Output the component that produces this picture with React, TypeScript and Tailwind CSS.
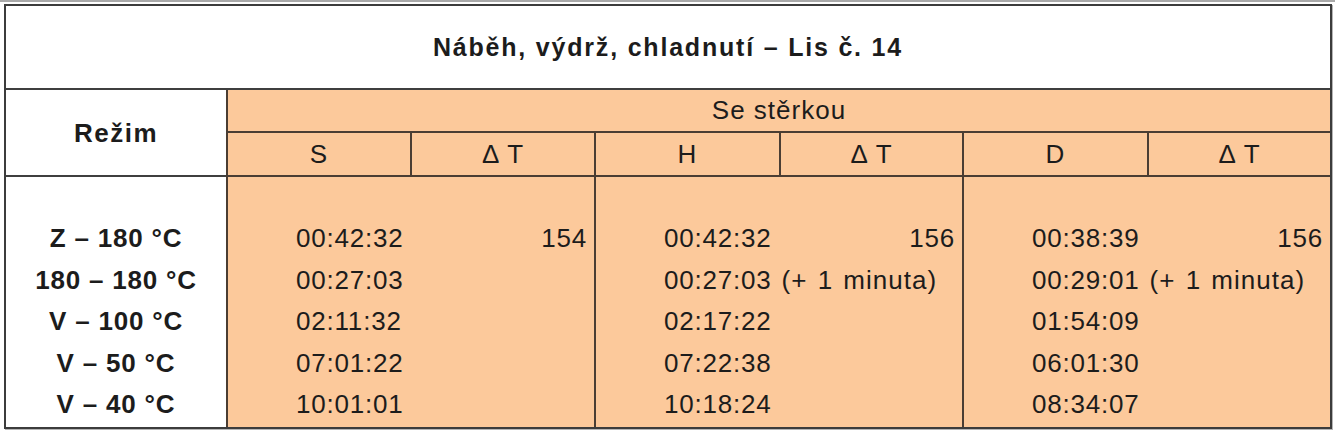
import React from "react";

const labels = ["Z – 180 °C", "180 – 180 °C", "V – 100 °C", "V – 50 °C", "V – 40 °C"];

type Group = { rows: { t: string; note?: string; dt?: string }[] };

const groups: Group[] = [
  {
    rows: [
      { t: "00:42:32", dt: "154" },
      { t: "00:27:03" },
      { t: "02:11:32" },
      { t: "07:01:22" },
      { t: "10:01:01" },
    ],
  },
  {
    rows: [
      { t: "00:42:32", dt: "156" },
      { t: "00:27:03", note: "(+ 1 minuta)" },
      { t: "02:17:22" },
      { t: "07:22:38" },
      { t: "10:18:24" },
    ],
  },
  {
    rows: [
      { t: "00:38:39", dt: "156" },
      { t: "00:29:01", note: "(+ 1 minuta)" },
      { t: "01:54:09" },
      { t: "06:01:30" },
      { t: "08:34:07" },
    ],
  },
];

const subHeads = ["S", "Δ T", "H", "Δ T", "D", "Δ T"];

export default function App() {
  return (
    <div className="w-[1335px] h-[432px] bg-white border-t-2 border-[#a9a9a9] pt-[2px] pl-[4px] font-['Liberation_Sans',Arial,sans-serif] text-[#1c1c1c]">
      <div className="w-[1328px] border-2 border-[#3c3c3c] shadow-[1px_1px_0_#b5b5b5] grid grid-cols-[220px_184px_184px_185px_183px_185px_183px]">
        <div className="col-span-7 h-[84px] border-b-2 border-[#3f3f3f] flex items-center justify-center pt-[2px] text-[25px] font-bold tracking-[1.8px]">
          Náběh, výdrž, chladnutí – Lis č. 14
        </div>

        <div className="row-span-2 border-b-2 border-[#3f3f3f] flex items-center justify-center text-[26px] font-bold tracking-[1.5px] pt-[2px]">
          Režim
        </div>
        <div className="col-span-6 h-[43px] bg-[#fcc99b] border-l-2 border-b-2 border-[#4a3d33] flex items-center justify-center text-[26px] tracking-[1px]">
          Se stěrkou
        </div>
        {subHeads.map((h, i) => (
          <div
            key={i}
            className="h-[44px] bg-[#fcc99b] border-l-2 border-b-2 border-[#4a3d33] flex items-center justify-center text-[26px] tracking-[1px]"
          >
            {h}
          </div>
        ))}

        <div className="h-[250px] pt-[41px] flex flex-col">
          {labels.map((l) => (
            <div key={l} className="h-[41.5px] flex items-center justify-center text-[26px] font-bold tracking-[0.8px]">
              {l}
            </div>
          ))}
        </div>
        {groups.map((g, gi) => (
          <div key={gi} className="col-span-2 h-[250px] pt-[41px] bg-[#fcc99b] border-l-2 border-[#4a3d33] flex flex-col">
            {g.rows.map((r, ri) => (
              <div key={ri} className="h-[41.5px] flex items-center justify-between pl-[68px] pr-[7px] text-[26px] tracking-[0.8px]">
                <span className="flex items-center">
                  <span>{r.t}</span>
                  {r.note ? <span className="ml-[10px] tracking-[1px] [word-spacing:2px]">{r.note}</span> : null}
                </span>
                {r.dt ? <span>{r.dt}</span> : null}
              </div>
            ))}
          </div>
        ))}
      </div>
    </div>
  );
}
